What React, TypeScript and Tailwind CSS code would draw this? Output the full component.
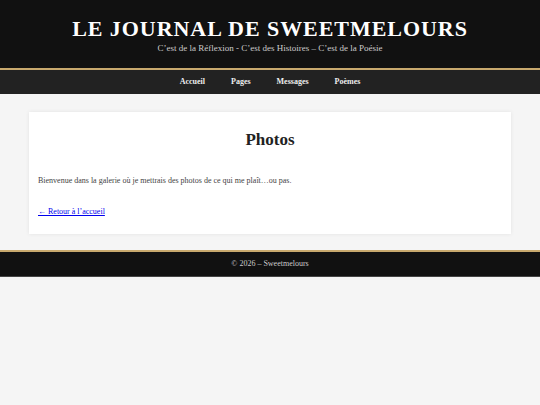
export default function App() {
  const nav = ['Accueil', 'Pages', 'Messages', 'Poèmes'];
  return (
    <div className="min-h-[405px] bg-[#f5f5f5] font-['Liberation_Serif',serif] text-[#333]">
      {/* Header */}
      <header className="bg-[#111] text-center h-[70px] pt-[15px] border-b-2 border-[#c8a96e]">
        <h1 className="text-[22px] leading-[28px] font-bold tracking-[0.95px] text-white">
          LE JOURNAL DE SWEETMELOURS
        </h1>
        <p className="text-[9px] leading-[10px] text-[#ccc]">
          C’est de la Réflexion - C’est des Histoires – C’est de la Poésie
        </p>
      </header>

      {/* Nav */}
      <nav className="bg-[#222] h-[24px] flex items-center justify-center gap-[26px]">
        {nav.map((n) => (
          <a key={n} className="text-[8px] font-bold text-[#eee]">
            {n}
          </a>
        ))}
      </nav>

      {/* Content */}
      <main className="px-[29px] pt-[18px] pb-[16px]">
        <div className="bg-white shadow-[0_0_4px_rgba(0,0,0,0.08)] h-[122px] px-[9px] pt-[18px]">
          <h2 className="text-center text-[17px] leading-[20px] font-bold text-[#222]">Photos</h2>
          <p className="text-[8px] leading-[10px] text-[#444] mt-[26px]">
            Bienvenue dans la galerie où je mettrais des photos de ce qui me plaît…ou pas.
          </p>
          <a href="#" className="block w-fit text-[8px] leading-[10px] text-[#0000ee] underline mt-[21px]">
            ← Retour à l’accueil
          </a>
        </div>
      </main>

      {/* Footer */}
      <footer className="bg-[#111] border-t-2 border-[#c8a96e] border-b border-b-[#444] h-[27px] flex items-center justify-center">
        <span className="text-[8px] text-[#ccc]">© 2026 – Sweetmelours</span>
      </footer>
    </div>
  );
}
